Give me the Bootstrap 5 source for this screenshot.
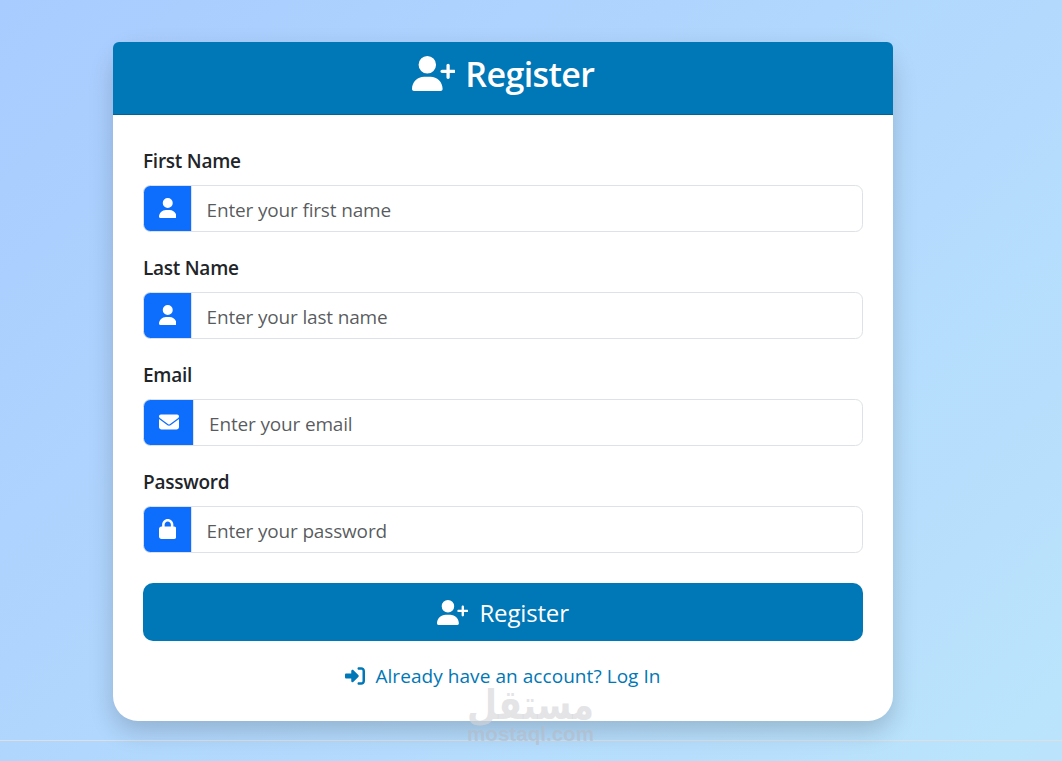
<!DOCTYPE html>
<html lang="en">
<head>
<meta charset="utf-8">
<meta name="viewport" content="width=device-width, initial-scale=1">
<title>Register</title>
<link href="https://cdn.jsdelivr.net/npm/bootstrap@5.3.0/dist/css/bootstrap.min.css" rel="stylesheet">
<style>
html{font-size:20px}
body{font-family:"Open Sans","Noto Sans",sans-serif;min-height:761px;overflow:hidden;background:linear-gradient(135deg,#a8ccff 0%,#bbe4fc 100%) no-repeat}
.page-area{width:1006px;height:740px;padding-top:42px}
.register-card{width:780px;height:679px;border:0;border-radius:25px;box-shadow:0 10px 25px rgba(0,0,0,.18)}
.register-card .card-header{background:#0077b6;border-radius:6px 6px 0 0;height:73px}
.register-card .card-body{padding:30px}
.register-card h3{font-size:35px;height:42px;line-height:42px}
.form-label{font-size:19px;line-height:28px;padding-top:2px;font-weight:600;letter-spacing:-.26px}
.form-control{font-size:19px;line-height:30px;height:47px;padding:9px 15px 6px;letter-spacing:-.16px}
.input-group-text{height:47px;background:#0d6efd;color:#fff;padding:6px 14.5px 8px}
.icon{height:1em;fill:currentColor;flex:none;display:block}
.btn-register,.btn-register:hover{background:#0077b6;color:#fff;height:58px;border:0;border-radius:10px;font-size:25px;margin-top:30px}
.login-link{color:#0077b6;font-size:20px;line-height:29px}
.label-h{font-size:34px;letter-spacing:-.6px;padding-top:2px}
.label-b{font-size:24px;padding:2px 0 0 1px;letter-spacing:-.15px}
.label-l{font-size:19px;padding-top:1px;letter-spacing:.06px}
.page-rule{height:1px;background:#dcdfe3;width:100%}
.watermark{left:460px;top:680px;pointer-events:none;overflow:visible}
</style>
</head>
<body>
<main class="page-area d-flex justify-content-center align-items-start">
  <div class="card register-card">
    <div class="card-header text-white">
      <h3 class="mb-2 d-flex justify-content-center align-items-center">
        <svg class="icon" viewBox="0 0 640 512"><path d="M96 128a128 128 0 1 1 256 0A128 128 0 1 1 96 128zM0 482.3C0 383.8 79.8 304 178.3 304h91.4C368.2 304 448 383.8 448 482.3c0 16.4-13.3 29.7-29.7 29.7H29.7C13.3 512 0 498.7 0 482.3zM504 312V248H440c-13.3 0-24-10.7-24-24s10.7-24 24-24h64V136c0-13.3 10.7-24 24-24s24 10.7 24 24v64h64c13.3 0 24 10.7 24 24s-10.7 24-24 24H552v64c0 13.3-10.7 24-24 24s-24-10.7-24-24z"/></svg>
        <span class="label-h ms-2 fw-semibold">Register</span>
      </h3>
    </div>
    <form class="card-body">
      <div class="mb-3">
        <label class="form-label d-block mb-2" for="first">First Name</label>
        <div class="input-group">
          <span class="input-group-text"><svg class="icon" viewBox="0 0 448 512"><path d="M224 256A128 128 0 1 0 224 0a128 128 0 1 0 0 256zm-45.7 48C79.8 304 0 383.8 0 482.3C0 498.7 13.3 512 29.7 512H418.3c16.4 0 29.7-13.3 29.7-29.7C448 383.8 368.2 304 269.7 304H178.3z"/></svg></span>
          <input id="first" type="text" class="form-control" placeholder="Enter your first name">
        </div>
      </div>
      <div class="mb-3">
        <label class="form-label d-block mb-2" for="last">Last Name</label>
        <div class="input-group">
          <span class="input-group-text"><svg class="icon" viewBox="0 0 448 512"><path d="M224 256A128 128 0 1 0 224 0a128 128 0 1 0 0 256zm-45.7 48C79.8 304 0 383.8 0 482.3C0 498.7 13.3 512 29.7 512H418.3c16.4 0 29.7-13.3 29.7-29.7C448 383.8 368.2 304 269.7 304H178.3z"/></svg></span>
          <input id="last" type="text" class="form-control" placeholder="Enter your last name">
        </div>
      </div>
      <div class="mb-3">
        <label class="form-label d-block mb-2" for="email">Email</label>
        <div class="input-group">
          <span class="input-group-text"><svg class="icon" viewBox="0 0 512 512"><path d="M48 64C21.5 64 0 85.5 0 112c0 15.1 7.1 29.3 19.2 38.4L236.8 313.6c11.4 8.5 27 8.5 38.4 0L492.8 150.4c12.1-9.1 19.2-23.3 19.2-38.4c0-26.5-21.5-48-48-48H48zM0 176V384c0 35.3 28.7 64 64 64H448c35.3 0 64-28.7 64-64V176L294.4 339.2c-22.8 17.1-54 17.1-76.8 0L0 176z"/></svg></span>
          <input id="email" type="email" class="form-control" placeholder="Enter your email">
        </div>
      </div>
      <div>
        <label class="form-label d-block mb-2" for="pass">Password</label>
        <div class="input-group">
          <span class="input-group-text"><svg class="icon" viewBox="0 0 448 512"><path d="M144 144v48H304V144c0-44.2-35.8-80-80-80s-80 35.8-80 80zM80 192V144C80 64.5 144.5 0 224 0s144 64.5 144 144v48h16c35.3 0 64 28.7 64 64V448c0 35.3-28.7 64-64 64H64c-35.3 0-64-28.7-64-64V256c0-35.3 28.7-64 64-64H80z"/></svg></span>
          <input id="pass" type="password" class="form-control" placeholder="Enter your password">
        </div>
      </div>
      <button type="button" class="btn btn-register w-100 d-flex justify-content-center align-items-center">
        <svg class="icon me-2" viewBox="0 0 640 512"><path d="M96 128a128 128 0 1 1 256 0A128 128 0 1 1 96 128zM0 482.3C0 383.8 79.8 304 178.3 304h91.4C368.2 304 448 383.8 448 482.3c0 16.4-13.3 29.7-29.7 29.7H29.7C13.3 512 0 498.7 0 482.3zM504 312V248H440c-13.3 0-24-10.7-24-24s10.7-24 24-24h64V136c0-13.3 10.7-24 24-24s24 10.7 24 24v64h64c13.3 0 24 10.7 24 24s-10.7 24-24 24H552v64c0 13.3-10.7 24-24 24s-24-10.7-24-24z"/></svg>
        <span class="label-b">Register</span>
      </button>
      <a href="#" class="login-link mt-3 text-decoration-none d-flex justify-content-center align-items-center">
        <svg class="icon me-2" viewBox="0 0 512 512"><path d="M217.9 105.9L340.7 228.7c7.2 7.2 11.3 17.1 11.3 27.3s-4.1 20.1-11.3 27.3L217.9 406.1c-6.4 6.4-15 9.9-24 9.9c-18.7 0-33.9-15.2-33.9-33.9l0-62.1L32 320c-17.7 0-32-14.3-32-32l0-64c0-17.7 14.3-32 32-32l128 0 0-62.1c0-18.7 15.2-33.9 33.9-33.9c9 0 17.6 3.6 24 9.9zM352 416l64 0c17.7 0 32-14.3 32-32l0-256c0-17.7-14.3-32-32-32l-64 0c-17.7 0-32-14.3-32-32s14.3-32 32-32l64 0c53 0 96 43 96 96l0 256c0 53-43 96-96 96l-64 0c-17.7 0-32-14.3-32-32s14.3-32 32-32z"/></svg>
        <span class="label-l">Already have an account? Log In</span>
      </a>
    </form>
  </div>
</main>
<div class="page-rule"></div>
<svg class="watermark position-absolute" width="142" height="80" fill="#d4d5d9" fill-opacity=".65">
  <text x="7" y="39" textLength="127" lengthAdjust="spacingAndGlyphs" font-family="DejaVu Sans" font-weight="700" font-size="41">مستقل</text>
  <text x="7" y="61" textLength="127" lengthAdjust="spacingAndGlyphs" font-family="Liberation Sans" font-weight="700" font-size="20" fill="#b4bcc8">mostaql.com</text>
</svg>
<script src="https://cdn.jsdelivr.net/npm/bootstrap@5.3.0/dist/js/bootstrap.bundle.min.js"></script>
</body>
</html>
